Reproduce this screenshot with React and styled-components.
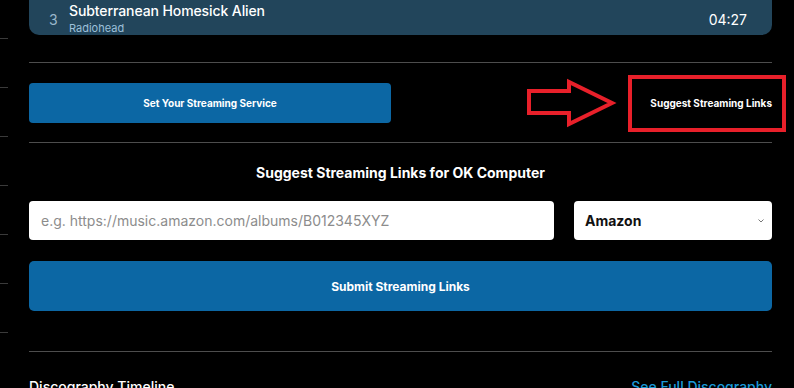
import React from "react";
import styled, { createGlobalStyle } from "styled-components";

const GlobalStyle = createGlobalStyle`
  html, body {
    margin: 0;
    padding: 0;
    background: #000;
    overflow: hidden;
  }
  body {
    font-family: Inter, "Noto Sans", "Liberation Sans", sans-serif;
    color: #fff;
  }
  * { box-sizing: border-box; }
`;

const Page = styled.div`
  position: relative;
  display: flex;
  align-items: flex-start;
  width: 794px;
  height: 388px;
  overflow: hidden;
`;

const Sidebar = styled.div`
  width: 8px;
  margin-top: -10px;
  flex-shrink: 0;
`;

const SideItem = styled.div`
  height: 49px;
  border-bottom: 1px solid #3a3a3a;
`;

const Main = styled.div`
  width: 743px;
  margin-left: 21px;
  display: flex;
  flex-direction: column;
  flex-shrink: 0;
  & > * {
    flex-shrink: 0;
  }
`;

const TrackCard = styled.div`
  height: 37px;
  margin-top: -2px;
  background: #22455b;
  border-radius: 0 0 10px 10px;
  display: flex;
  align-items: flex-end;
  padding: 0 25px 0 20px;
`;

const TrackNo = styled.span`
  align-self: center;
  width: 20px;
  font-size: 14px;
  color: #9bb8cc;
  padding-top: 5px;
`;

const TrackInfo = styled.div`
  flex: 1;
  display: flex;
  flex-direction: column;
  gap: 2px;
  line-height: 1.2;
`;

const TrackTitle = styled.span`
  font-size: 14px;
  font-weight: 500;
  letter-spacing: -0.1px;
  color: #fff;
`;

const TrackArtist = styled.span`
  font-size: 11px;
  color: #9cc0da;
`;

const TrackTime = styled.span`
  align-self: center;
  font-size: 14px;
  color: #fff;
  padding-top: 5px;
`;

const Divider = styled.hr`
  border: none;
  height: 1px;
  background: #4d4d4d;
  margin: ${(p) => p.$top || 0}px 0 0 0;
`;

const ServiceRow = styled.div`
  display: flex;
  align-items: center;
  justify-content: space-between;
  margin: 20px 0 19px;
`;

const BlueButton = styled.button`
  width: ${(p) => p.$width || "100%"};
  height: ${(p) => p.$height}px;
  background: #0c67a4;
  border: none;
  border-radius: ${(p) => p.$radius || 4}px;
  color: #fff;
  font-family: Inter, "Liberation Sans", sans-serif;
  font-weight: 700;
  font-size: ${(p) => p.$size}px;
  cursor: pointer;
`;

const TextLink = styled.button`
  background: none;
  border: none;
  padding: 0;
  color: #fff;
  font-family: Inter, "Liberation Sans", sans-serif;
  font-weight: 700;
  font-size: 10px;
  cursor: pointer;
`;

const Heading = styled.h3`
  margin: 20px 0 0;
  text-align: center;
  font-size: 14px;
  line-height: 20px;
  font-weight: 700;
`;

const FormRow = styled.div`
  display: flex;
  gap: 20px;
  margin-top: 18px;
`;

const UrlInput = styled.input`
  flex: 1;
  height: 39px;
  border: none;
  border-radius: 4px;
  padding: 0 12px;
  font-family: Inter, "Liberation Sans", sans-serif;
  font-size: 14px;
  color: #222;
  background: #fff;
  outline: none;
  &::placeholder {
    color: #8c8c8c;
  }
`;

const SelectBox = styled.div`
  width: 198px;
  height: 39px;
  background: #fff;
  border-radius: 4px;
  display: flex;
  align-items: center;
  justify-content: space-between;
  padding: 0 6px 0 11px;
  color: #111;
  font-weight: 700;
  font-size: 14px;
`;

const SubmitWrap = styled.div`
  margin-top: 21px;
`;

const TimelineHeader = styled.div`
  display: flex;
  justify-content: space-between;
  margin-top: 25px;
  font-size: 14px;
  line-height: 20px;
`;

const TimelineTitle = styled.span`
  font-weight: 500;
  color: #fff;
`;

const TimelineLink = styled.span`
  color: #1b9ad8;
  font-weight: 500;
`;

const Annotation = styled.div`
  position: absolute;
  left: 628px;
  top: 75px;
  width: 158px;
  height: 57px;
  border: 4px solid #e8202a;
  pointer-events: none;
`;

const ArrowSvg = styled.svg`
  position: absolute;
  left: 524px;
  top: 78px;
  pointer-events: none;
`;

const Chevron = () => (
  <svg width="10" height="6" viewBox="0 0 10 6" fill="none">
    <path d="M2.5 1.5 L5 4 L7.5 1.5" stroke="#777" strokeWidth="1" />
  </svg>
);

export default function App() {
  return (
    <>
      <GlobalStyle />
      <Page>
        <Sidebar>
          {Array.from({ length: 7 }).map((_, i) => (
            <SideItem key={i} />
          ))}
        </Sidebar>
        <Main>
          <TrackCard>
            <TrackNo>3</TrackNo>
            <TrackInfo>
              <TrackTitle>Subterranean Homesick Alien</TrackTitle>
              <TrackArtist>Radiohead</TrackArtist>
            </TrackInfo>
            <TrackTime>04:27</TrackTime>
          </TrackCard>
          <Divider $top={27} />
          <ServiceRow>
            <BlueButton $width="362px" $height={40} $size={10}>
              Set Your Streaming Service
            </BlueButton>
            <TextLink>Suggest Streaming Links</TextLink>
          </ServiceRow>
          <Divider />
          <Heading>Suggest Streaming Links for OK Computer</Heading>
          <FormRow>
            <UrlInput placeholder="e.g. https://music.amazon.com/albums/B012345XYZ" />
            <SelectBox>
              Amazon
              <Chevron />
            </SelectBox>
          </FormRow>
          <SubmitWrap>
            <BlueButton $height={50} $size={12} $radius={5}>
              Submit Streaming Links
            </BlueButton>
          </SubmitWrap>
          <Divider $top={40} />
          <TimelineHeader>
            <TimelineTitle>Discography Timeline</TimelineTitle>
            <TimelineLink>See Full Discography</TimelineLink>
          </TimelineHeader>
        </Main>
        <ArrowSvg width="96" height="52" viewBox="0 0 96 52">
          <path
            d="M5 13 L45 13 L45 4 L88 25 L45 46 L45 35 L5 35 Z"
            fill="none"
            stroke="#e8202a"
            strokeWidth="4"
            strokeLinejoin="miter"
          />
        </ArrowSvg>
        <Annotation />
      </Page>
    </>
  );
}
